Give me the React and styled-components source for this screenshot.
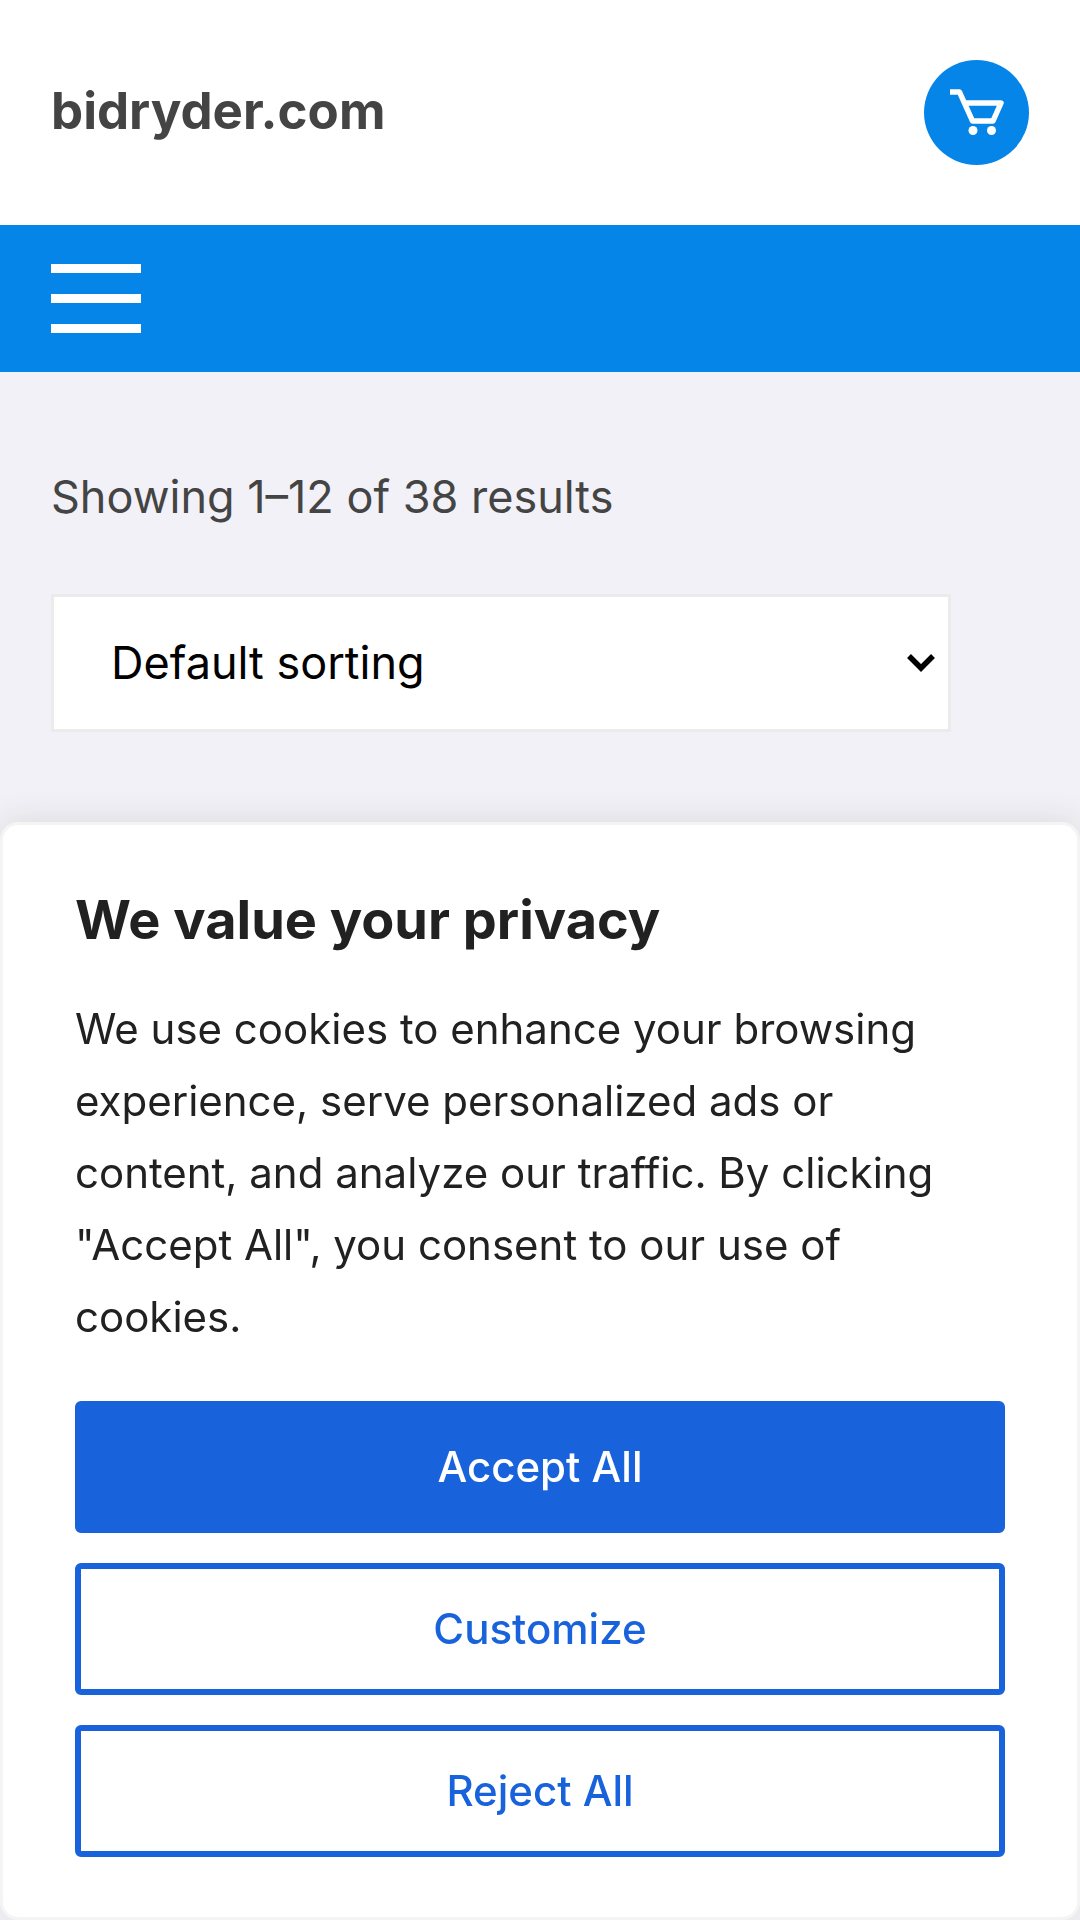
import React from 'react';
import styled, { createGlobalStyle, css } from 'styled-components';

const GlobalStyle = createGlobalStyle`
  *, *::before, *::after { box-sizing: border-box; }
  body {
    margin: 0;
    background: #f1f1f7;
    color: #444444;
    font-family: Inter, "Liberation Sans", sans-serif;
  }
`;

const Page = styled.div`
  min-height: 100vh;
`;

const Header = styled.header`
  display: flex;
  align-items: center;
  justify-content: space-between;
  padding: 60px 51px;
  background: #ffffff;
`;

const SiteName = styled.a`
  padding-bottom: 4px;
  color: #444444;
  font-size: 51px;
  font-weight: 700;
  line-height: 70px;
  text-decoration: none;
`;

const CartLink = styled.a`
  display: block;
  width: 105px;
  height: 105px;
  border-radius: 50%;
  background: #0585e8;

  svg {
    display: block;
  }
`;

const NavBar = styled.nav`
  display: flex;
  padding: 39px 51px;
  background: #0585e8;
`;

const MenuButton = styled.button`
  display: flex;
  flex-direction: column;
  gap: 21px;
  width: 90px;
  padding: 0;
  border: 0;
  background: none;
  cursor: pointer;
`;

const MenuBar = styled.span`
  width: 100%;
  height: 9px;
  background: #ffffff;
`;

const Main = styled.main`
  display: flex;
  flex-direction: column;
  gap: 62px;
  padding: 90px 51px;
`;

const ResultCount = styled.p`
  margin: 0;
  font-size: 45px;
  line-height: 70px;
`;

const SortField = styled.label`
  position: relative;
  display: block;
  width: 92%;
`;

const SortSelect = styled.select`
  appearance: none;
  display: block;
  width: 100%;
  height: 138px;
  padding: 0 57px 2px;
  border: 3px solid #ebebeb;
  border-radius: 0;
  background: #ffffff;
  color: #000000;
  font-family: inherit;
  font-size: 45px;
`;

const SortArrow = styled.svg`
  position: absolute;
  top: 50%;
  right: 16px;
  transform: translateY(-50%);
  pointer-events: none;
`;

const ConsentPanel = styled.section`
  position: fixed;
  right: 0;
  bottom: 0;
  left: 0;
  padding: 60px 72px;
  border: 3px solid #f4f4f4;
  border-radius: 18px;
  background: #ffffff;
  box-shadow: 0 -3px 30px 0 #acabab4d;
  color: #212121;
`;

const ConsentTitle = styled.h2`
  margin: 0 0 38px;
  font-size: 54px;
  font-weight: 700;
  line-height: 70px;
`;

const ConsentText = styled.p`
  margin: 0 0 48px;
  font-size: 42px;
  line-height: 72px;
`;

const ConsentActions = styled.div`
  display: flex;
  flex-direction: column;
  gap: 30px;
`;

const ConsentButton = styled.button`
  padding: 24px;
  border: 6px solid #1863dc;
  border-radius: 6px;
  font-family: inherit;
  font-size: 42px;
  font-weight: 500;
  line-height: 72px;
  cursor: pointer;
  ${({ $primary }) =>
    $primary
      ? css`
          background: #1863dc;
          color: #ffffff;
        `
      : css`
          background: transparent;
          color: #1863dc;
        `}
`;

function CartIcon() {
  return (
    <svg width="105" height="105" viewBox="0 0 105 105" fill="none" aria-hidden="true">
      <path
        d="M26 32H35.5L48.5 61H69L77 43H41"
        stroke="#ffffff"
        strokeWidth="5.5"
        strokeLinejoin="round"
      />
      <circle cx="49" cy="70.5" r="4.5" fill="#ffffff" />
      <circle cx="67.5" cy="70.5" r="4.5" fill="#ffffff" />
    </svg>
  );
}

export default function App() {
  return (
    <Page>
      <GlobalStyle />
      <Header>
        <SiteName href="#home">bidryder.com</SiteName>
        <CartLink href="#cart" aria-label="Cart">
          <CartIcon />
        </CartLink>
      </Header>
      <NavBar aria-label="Primary">
        <MenuButton type="button" aria-label="Menu">
          <MenuBar />
          <MenuBar />
          <MenuBar />
        </MenuButton>
      </NavBar>
      <Main>
        <ResultCount>Showing 1–12 of 38 results</ResultCount>
        <SortField>
          <SortSelect aria-label="Shop order" defaultValue="default">
            <option value="default">Default sorting</option>
          </SortSelect>
          <SortArrow width="28" height="18" viewBox="0 0 28 18" fill="none" aria-hidden="true">
            <path d="M2 2L14 14L26 2" stroke="#000000" strokeWidth="5.5" />
          </SortArrow>
        </SortField>
      </Main>
      <ConsentPanel aria-labelledby="consent-title">
        <ConsentTitle id="consent-title">We value your privacy</ConsentTitle>
        <ConsentText>
          We use cookies to enhance your browsing experience, serve personalized ads or content,
          and analyze our traffic. By clicking "Accept All", you consent to our use of cookies.
        </ConsentText>
        <ConsentActions>
          <ConsentButton type="button" $primary>Accept All</ConsentButton>
          <ConsentButton type="button">Customize</ConsentButton>
          <ConsentButton type="button">Reject All</ConsentButton>
        </ConsentActions>
      </ConsentPanel>
    </Page>
  );
}
